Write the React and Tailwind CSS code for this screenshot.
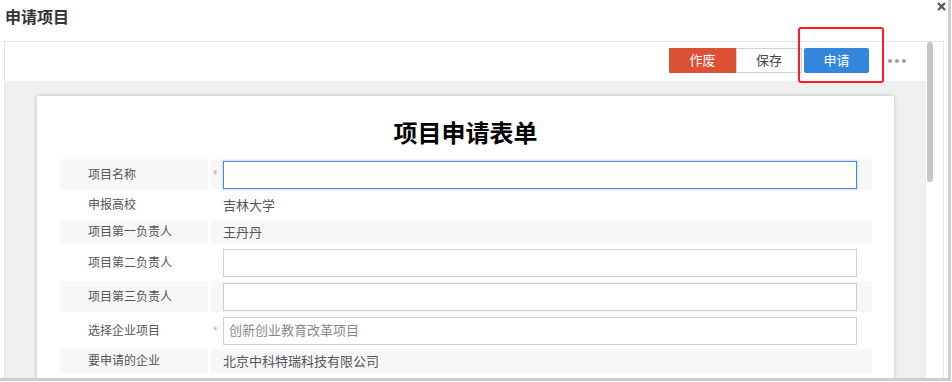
import React from 'react';

const rows = [
  { label: '项目名称', type: 'input', required: true, focused: true, h: 'h-[31px]', shade: true },
  { label: '申报高校', type: 'text', value: '吉林大学', h: 'h-[24px]' },
  { label: '项目第一负责人', type: 'text', value: '王丹丹', h: 'h-[24px]', shade: true },
  { label: '项目第二负责人', type: 'input', h: 'h-[31px]' },
  { label: '项目第三负责人', type: 'input', h: 'h-[31px]', shade: true },
  { label: '选择企业项目', type: 'input', required: true, value: '创新创业教育改革项目', h: 'h-[31px]' },
  { label: '要申请的企业', type: 'text', value: '北京中科特瑞科技有限公司', h: 'h-[24px]', shade: true },
];

const FormRow = ({ row }) => {
  const bg = row.shade ? 'bg-[#f7f7f7]' : 'bg-white';
  return (
    <>
      <div className={`${row.h} ${bg} pl-[28px] flex items-center text-[12px] text-[#555] leading-none`}>
        {row.label}
      </div>
      <div className={`${row.h} ${bg} relative pl-[12px] pr-[15px] flex items-center`}>
        {row.required && (
          <span className="absolute left-[2px] top-[10px] text-[12px] leading-none text-[#f39a9a]">*</span>
        )}
        {row.type === 'input' ? (
          <div
            className={`flex-1 h-[28px] flex items-center pl-[5px] text-[13px] text-[#888] bg-white ${
              row.focused
                ? 'border-[1.5px] border-[#4a8ad6] shadow-[0_0_2px_rgba(74,138,214,0.5)]'
                : 'border border-[#cfcfcf]'
            }`}
          >
            {row.value}
          </div>
        ) : (
          <span className="text-[13px] text-[#555] leading-none">{row.value}</span>
        )}
      </div>
    </>
  );
};

export default function App() {
  return (
    <div className="w-[952px] h-[382px] bg-white overflow-hidden relative font-['Liberation_Sans','Noto_Sans_CJK_SC',sans-serif]">
      <div className="w-[951px] h-[381px] border-r-[3px] border-b-[3px] border-[#cdcdcd] flex flex-col">
        {/* Dialog header */}
        <div className="h-[41px] shrink-0 pl-[5px] pt-[8px]">
          <h1 className="text-[16px] font-bold leading-[20px] text-[#333]">申请项目</h1>
        </div>

        {/* Panel */}
        <div className="flex-1 min-h-0 mx-[4px] border-t border-l border-r border-[#e6e6e6] flex overflow-hidden">
          <div className="flex-1 min-w-0 flex flex-col">
            {/* Toolbar */}
            <div className="h-[39px] shrink-0 bg-white flex justify-end items-start pt-[6px] pr-[20px]">
              <button className="w-[67px] h-[25px] bg-[#dc5036] text-white text-[13px] leading-none">作废</button>
              <button className="w-[66px] h-[25px] bg-white border border-[#d0d0d0] text-[#444] text-[13px] leading-none">保存</button>
              <button className="w-[65px] h-[25px] ml-[2px] bg-[#3286dc] rounded-[2px] text-white text-[13px] leading-none">申请</button>
              <div className="ml-[19px] mt-[11px] flex gap-[3px]">
                <span className="w-[4px] h-[4px] rounded-full bg-[#a0a0a0]" />
                <span className="w-[4px] h-[4px] rounded-full bg-[#a0a0a0]" />
                <span className="w-[4px] h-[4px] rounded-full bg-[#a0a0a0]" />
              </div>
            </div>

            {/* Canvas */}
            <div className="flex-1 min-h-0 bg-[#efefef] px-[32px] pt-[15px] overflow-hidden">
              <div className="bg-white h-[400px] shadow-[0_0_4px_rgba(0,0,0,0.22)] pt-[20px] px-[23px]">
                <h2 className="h-[36px] leading-[36px] text-center text-[24px] font-bold text-black mb-[7px]">
                  项目申请表单
                </h2>
                <div className="grid grid-cols-[148px_661px] gap-[3px]">
                  {rows.map((row) => (
                    <FormRow key={row.label} row={row} />
                  ))}
                </div>
              </div>
            </div>
          </div>

          {/* Scrollbar */}
          <div className="w-[17px] shrink-0 bg-white pl-[1px]">
            <div className="w-[6px] h-[140px] bg-[#c6c6c6] rounded-[3px]" />
          </div>
        </div>
      </div>

      {/* Close */}
      <svg className="absolute left-[937px] top-[2px]" width="9" height="9" viewBox="0 0 9 9">
        <path d="M1 1L8 8M8 1L1 8" stroke="#555" strokeWidth="2.2" />
      </svg>

      {/* Highlight box */}
      <div className="absolute left-[798px] top-[27px] w-[86px] h-[56px] border-[2px] border-[#ff1c1c] rounded-[3px]" />
    </div>
  );
}
